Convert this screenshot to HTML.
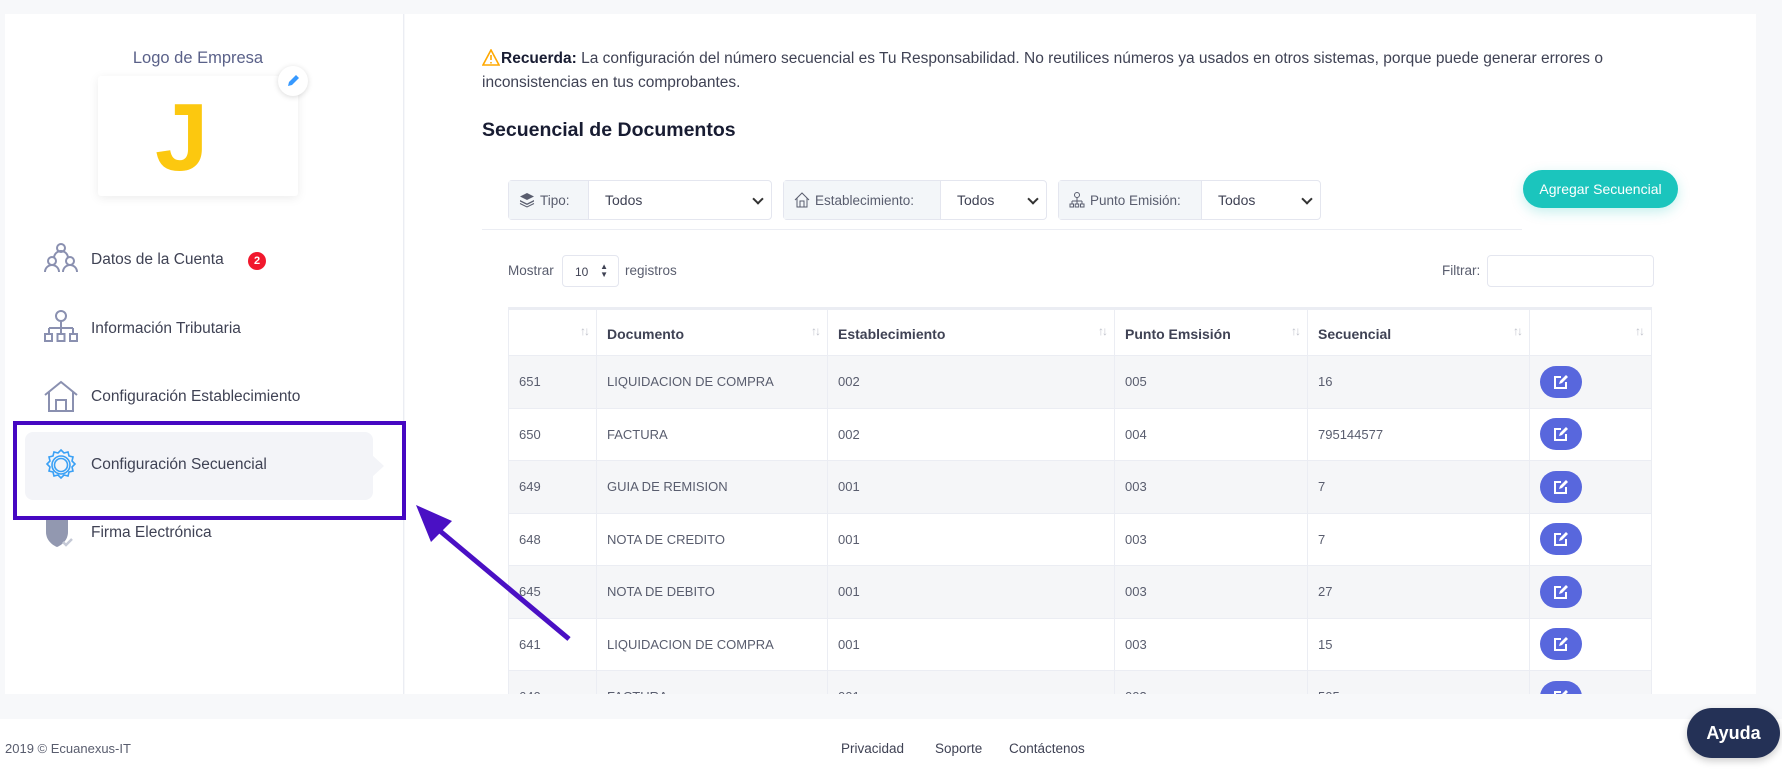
<!DOCTYPE html>
<html><head><meta charset="utf-8"><style>
*{margin:0;padding:0;box-sizing:border-box}
body{width:1782px;height:770px;background:#f7f8fa;font-family:"Liberation Sans",sans-serif;position:relative;overflow:hidden;color:#3f4254}
.a{position:absolute}
.side{left:5px;top:14px;width:399px;height:680px;background:#fff;border-right:1px solid #ebedf3}
.main{left:405px;top:14px;width:1351px;height:680px;background:#fff;overflow:hidden}
.mi{position:absolute;left:91px;font-size:15.5px;color:#3f4254;white-space:nowrap}
.sel{position:absolute;top:180px;height:40px;border:1px solid #e4e6ef;border-radius:4px;display:flex;font-size:14px;background:#fff}
.sel .l{background:#f3f6f9;border-right:1px solid #e4e6ef;display:flex;align-items:center;padding-left:10px;color:#595d6e;font-size:13.5px;gap:5px}
.sel .v{display:flex;align-items:center;padding-left:16px;flex:1;position:relative;color:#3f4254}
.sel .v:after{content:"";position:absolute;right:9px;top:14px;width:6px;height:6px;border-right:2px solid #333;border-bottom:2px solid #333;transform:rotate(45deg)}
table{border-collapse:collapse;position:absolute;left:103px;top:293px;width:1144px;font-size:13px;border-top:3px solid #ebedf3}
td,th{border:1px solid #ebedf3;text-align:left;padding-left:10px;color:#595d6e;font-weight:normal;position:relative}
th{height:47px;font-size:14px;color:#3f4254;font-weight:600;padding-top:3px}
td{height:52.5px}
tr:nth-child(even) td{background:#f5f6f8}
.ar{position:absolute;right:8px;top:14px;font-size:12px;color:#c0c3cc;letter-spacing:-2px}
.eb{display:inline-block;width:42px;height:32px;border-radius:16px;background:#5867dd;position:relative;vertical-align:middle}
.eb svg{position:absolute;left:14px;top:9px}
.ft{position:absolute;top:741px;font-size:13.5px;color:#3f4254}
</style></head><body>
<div class="a side"></div>
<div class="a main"></div>
<div class="a" style="left:0;top:694px;width:1782px;height:25px;background:#f7f8fa"></div>
<div class="a" style="left:0;top:719px;width:1782px;height:51px;background:#fff"></div>

<div class="a" style="left:98px;top:49px;width:200px;text-align:center;font-size:16.5px;color:#5a6189">Logo de Empresa</div>
<div class="a" style="left:98px;top:76px;width:200px;height:120px;background:#fff;box-shadow:0 2px 10px rgba(0,0,0,.08);border-radius:3px"></div>
<div class="a" style="left:155px;top:88px;font-size:96px;font-weight:bold;color:#fcc80f;line-height:100px">J</div>
<div class="a" style="left:278px;top:66px;width:30px;height:30px;border-radius:50%;background:#fff;box-shadow:0 1px 6px rgba(0,0,0,.15)">
<svg width="30" height="30" viewBox="0 0 30 30"><path d="M10 20l1-4 7-7 3 3-7 7z" fill="#3699ff"/></svg></div>

<div class="a" style="left:25px;top:432px;width:348px;height:68px;background:#f3f4f8;border-radius:8px"></div>
<div class="a" style="left:372px;top:455px;width:0;height:0;border-top:11px solid transparent;border-bottom:11px solid transparent;border-left:12px solid #f3f4f8"></div>

<svg class="a" style="left:44px;top:242px" width="34" height="32" viewBox="0 0 34 32" fill="none" stroke="#8a90b0" stroke-width="2"><circle cx="17" cy="6" r="4"/><path d="M10 16a7 7 0 0 1 14 0"/><circle cx="8" cy="19" r="4"/><circle cx="26" cy="19" r="4"/><path d="M1 30a7 7 0 0 1 14 0M19 30a7 7 0 0 1 14 0"/></svg>
<div class="mi" style="top:251px">Datos de la Cuenta</div>
<div class="a" style="left:248px;top:252px;width:18px;height:18px;border-radius:50%;background:#f1182d;color:#fff;font-size:11px;font-weight:bold;text-align:center;line-height:18px">2</div>

<svg class="a" style="left:44px;top:310px" width="34" height="34" viewBox="0 0 34 34" fill="none" stroke="#8a90b0" stroke-width="2"><circle cx="17" cy="6" r="5"/><path d="M17 11v7M5 18h24M5 18v6M17 18v6M29 18v6"/><rect x="1" y="24" width="7" height="7"/><rect x="13.5" y="24" width="7" height="7"/><rect x="26" y="24" width="7" height="7"/></svg>
<div class="mi" style="top:320px">Información Tributaria</div>

<svg class="a" style="left:44px;top:380px" width="34" height="32" viewBox="0 0 34 32" fill="none" stroke="#8a90b0" stroke-width="2"><path d="M1 15L17 2l16 13M5 12v19h24V12M12 31V20h10v11"/></svg>
<div class="mi" style="top:388px">Configuración Establecimiento</div>

<svg class="a" style="left:44px;top:448px" width="34" height="34" viewBox="0 0 34 34" fill="none" stroke="#3aa0f5" stroke-width="1.6"><path d="M17 2l3 3 4-1 1 4 4 1-1 4 3 3-3 3 1 4-4 1-1 4-4-1-3 3-3-3-4 1-1-4-4-1 1-4-3-3 3-3-1-4 4-1 1-4 4 1z"/><circle cx="17" cy="17" r="9"/><circle cx="17" cy="17" r="6.5"/></svg>
<div class="mi" style="top:456px">Configuración Secuencial</div>

<svg class="a" style="left:44px;top:516px" width="34" height="34" viewBox="0 0 34 34"><path d="M2 2h22v14c0 8-6 13-11 15C8 29 2 24 2 16z" fill="#9298b0"/><path d="M19 26l3 3 6-6" stroke="#c5c9d6" stroke-width="2.5" fill="none"/></svg>
<div class="mi" style="top:524px">Firma Electrónica</div>

<div class="a" style="left:13px;top:421px;width:393px;height:99px;border:4px solid #4607c2"></div>

<svg class="a" style="left:482px;top:49px" width="18" height="17" viewBox="0 0 18 17"><path d="M9 1L17 16H1z" fill="none" stroke="#ffa800" stroke-width="1.6"/><path d="M9 6v5M9 13v1.5" stroke="#ffa800" stroke-width="1.6"/></svg>
<div class="a" style="left:501px;top:50px;font-size:15.5px;color:#3f4254;white-space:nowrap"><b style="color:#181c32">Recuerda:</b> La configuración del número secuencial es Tu Responsabilidad. No reutilices números ya usados en otros sistemas, porque puede generar errores o</div>
<div class="a" style="left:482px;top:74px;font-size:15.5px;color:#3f4254">inconsistencias en tus comprobantes.</div>
<div class="a" style="left:482px;top:119px;font-size:19.5px;font-weight:bold;color:#181c32">Secuencial de Documentos</div>

<div class="sel" style="left:508px;width:264px"><div class="l" style="width:80px"><svg width="16" height="16" viewBox="0 0 16 16" fill="#595d6e"><path d="M8 1l7 3.5-7 3.5-7-3.5z"/><path d="M1 8l7 3.5 7-3.5v1.5L8 13 1 9.5z"/><path d="M1 11.5L8 15l7-3.5" stroke="#595d6e" fill="none"/></svg>Tipo:</div><div class="v">Todos</div></div>
<div class="sel" style="left:783px;width:264px"><div class="l" style="width:157px"><svg width="16" height="16" viewBox="0 0 16 16" fill="none" stroke="#595d6e"><path d="M1 8L8 1l7 7M3 6v9h10V6M6 15V9h4v6"/></svg>Establecimiento:</div><div class="v">Todos</div></div>
<div class="sel" style="left:1058px;width:263px"><div class="l" style="width:143px"><svg width="16" height="16" viewBox="0 0 16 16" fill="none" stroke="#595d6e"><circle cx="8" cy="3" r="2.5"/><path d="M8 5.5V9M3 9h10M3 9v3M8 9v3M13 9v3"/><rect x="1" y="12" width="3.5" height="3"/><rect x="6.2" y="12" width="3.5" height="3"/><rect x="11.5" y="12" width="3.5" height="3"/></svg>Punto Emisión:</div><div class="v">Todos</div></div>
<div class="a" style="left:482px;top:229px;width:1040px;height:1px;background:#ebedf3"></div>
<div class="a" style="left:1523px;top:170px;width:155px;height:38px;border-radius:19px;background:#1bc5bd;color:#fff;font-size:14px;text-align:center;line-height:38px;box-shadow:0 4px 12px rgba(27,197,189,.25)">Agregar Secuencial</div>

<div class="a" style="left:508px;top:263px;font-size:13.5px;color:#595d6e">Mostrar</div>
<div class="a" style="left:562px;top:255px;width:57px;height:32px;border:1px solid #e4e6ef;border-radius:4px;font-size:12px;padding:9px 0 0 12px;color:#3f4254">10 <span style="position:absolute;right:10px;top:7px;font-size:8px;line-height:8px">▲<br>▼</span></div>
<div class="a" style="left:625px;top:263px;font-size:13.5px;color:#595d6e">registros</div>
<div class="a" style="left:1442px;top:263px;font-size:13.5px;color:#595d6e">Filtrar:</div>
<div class="a" style="left:1487px;top:255px;width:167px;height:32px;border:1px solid #e4e6ef;border-radius:4px"></div>

<div class="a" style="left:405px;top:14px;width:1351px;height:680px;overflow:hidden">
<table>
<tr><th style="width:88px"><span class="ar">↑↓</span></th><th style="width:231px">Documento<span class="ar">↑↓</span></th><th style="width:287px">Establecimiento<span class="ar">↑↓</span></th><th style="width:193px">Punto Emsisión<span class="ar">↑↓</span></th><th style="width:222px">Secuencial<span class="ar">↑↓</span></th><th><span class="ar">↑↓</span></th></tr>
<tr><td>651</td><td>LIQUIDACION DE COMPRA</td><td>002</td><td>005</td><td>16</td><td><span class="eb"><svg width="14" height="14" viewBox="0 0 14 14" fill="none" stroke="#fff" stroke-width="2"><path d="M7 2H1v11h11V7"/><path d="M5 9l1-3 6-6 2 2-6 6z" fill="#fff" stroke="none"/></svg></span></td></tr>
<tr><td>650</td><td>FACTURA</td><td>002</td><td>004</td><td>795144577</td><td><span class="eb"><svg width="14" height="14" viewBox="0 0 14 14" fill="none" stroke="#fff" stroke-width="2"><path d="M7 2H1v11h11V7"/><path d="M5 9l1-3 6-6 2 2-6 6z" fill="#fff" stroke="none"/></svg></span></td></tr>
<tr><td>649</td><td>GUIA DE REMISION</td><td>001</td><td>003</td><td>7</td><td><span class="eb"><svg width="14" height="14" viewBox="0 0 14 14" fill="none" stroke="#fff" stroke-width="2"><path d="M7 2H1v11h11V7"/><path d="M5 9l1-3 6-6 2 2-6 6z" fill="#fff" stroke="none"/></svg></span></td></tr>
<tr><td>648</td><td>NOTA DE CREDITO</td><td>001</td><td>003</td><td>7</td><td><span class="eb"><svg width="14" height="14" viewBox="0 0 14 14" fill="none" stroke="#fff" stroke-width="2"><path d="M7 2H1v11h11V7"/><path d="M5 9l1-3 6-6 2 2-6 6z" fill="#fff" stroke="none"/></svg></span></td></tr>
<tr><td>645</td><td>NOTA DE DEBITO</td><td>001</td><td>003</td><td>27</td><td><span class="eb"><svg width="14" height="14" viewBox="0 0 14 14" fill="none" stroke="#fff" stroke-width="2"><path d="M7 2H1v11h11V7"/><path d="M5 9l1-3 6-6 2 2-6 6z" fill="#fff" stroke="none"/></svg></span></td></tr>
<tr><td>641</td><td>LIQUIDACION DE COMPRA</td><td>001</td><td>003</td><td>15</td><td><span class="eb"><svg width="14" height="14" viewBox="0 0 14 14" fill="none" stroke="#fff" stroke-width="2"><path d="M7 2H1v11h11V7"/><path d="M5 9l1-3 6-6 2 2-6 6z" fill="#fff" stroke="none"/></svg></span></td></tr>
<tr><td>640</td><td>FACTURA</td><td>001</td><td>003</td><td>505</td><td><span class="eb"><svg width="14" height="14" viewBox="0 0 14 14" fill="none" stroke="#fff" stroke-width="2"><path d="M7 2H1v11h11V7"/><path d="M5 9l1-3 6-6 2 2-6 6z" fill="#fff" stroke="none"/></svg></span></td></tr>
</table>
</div>
<svg class="a" style="left:400px;top:495px" width="190" height="160" viewBox="0 0 190 160"><path d="M169 144L40 36" stroke="#4a10c4" stroke-width="5" fill="none"/><path d="M16 10L52 26 31 47z" fill="#4a10c4"/></svg>

<div class="ft" style="left:5px;font-size:13px;color:#595d6e">2019 © Ecuanexus-IT</div>
<div class="ft" style="left:841px">Privacidad</div>
<div class="ft" style="left:935px">Soporte</div>
<div class="ft" style="left:1009px">Contáctenos</div>
<div class="a" style="left:1687px;top:708px;width:93px;height:50px;border-radius:25px;background:#243156;color:#fff;font-weight:bold;font-size:18px;text-align:center;line-height:50px;box-shadow:0 3px 8px rgba(0,0,0,.2)">Ayuda</div>
</body></html>
